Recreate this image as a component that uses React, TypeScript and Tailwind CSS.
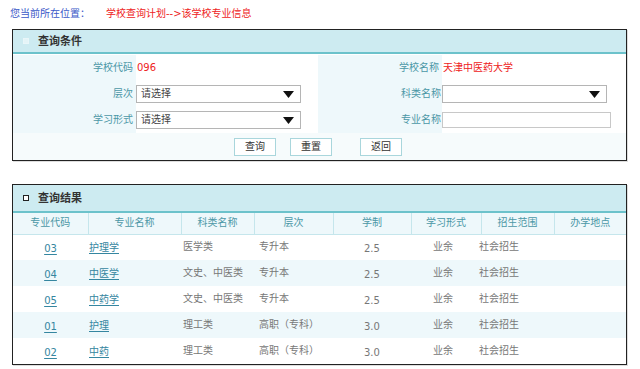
import React from "react";

const rows = [
  { code: "03", name: "护理学", type: "医学类", level: "专升本", years: "2.5" },
  { code: "04", name: "中医学", type: "文史、中医类", level: "专升本", years: "2.5" },
  { code: "05", name: "中药学", type: "文史、中医类", level: "专升本", years: "2.5" },
  { code: "01", name: "护理", type: "理工类", level: "高职（专科）", years: "3.0" },
  { code: "02", name: "中药", type: "理工类", level: "高职（专科）", years: "3.0" },
];

const cols = [
  { label: "专业代码", w: "w-[75px]" },
  { label: "专业名称", w: "w-[93px]" },
  { label: "科类名称", w: "w-[73px]" },
  { label: "层次", w: "w-[79px]" },
  { label: "学制", w: "w-[78px]" },
  { label: "学习形式", w: "w-[70px]" },
  { label: "招生范围", w: "w-[73px]" },
  { label: "办学地点", w: "" },
];

const Select = ({ text }: { text: string }) => (
  <div className="flex items-center justify-between w-[165px] h-[18px] border border-[#b5b5b5] bg-white pl-1 pr-[6px]">
    <span className="text-[#444]">{text}</span>
    <svg width="11" height="7" viewBox="0 0 11 7">
      <path d="M0 0 H11 L5.5 7 Z" fill="#111" />
    </svg>
  </div>
);

const PanelHead = ({ title, dark }: { title: string; dark?: boolean }) => (
  <div className="flex items-center gap-[9px] pl-[10px] bg-[#cdebf1] border-b-2 border-[#6cc2cb]">
    <span
      className={`w-[6px] h-[6px] border ${
        dark ? "border-[#222] bg-[#fff]" : "border-[#e9f6f9] bg-[#e4f4f7]"
      }`}
    />
    <span className="text-[11px] font-bold text-[#333]">{title}</span>
  </div>
);

const Btn = ({ children }: { children: React.ReactNode }) => (
  <button className="w-[42px] h-[18px] border border-[#a9d6dc] bg-white text-[10px] text-[#333]">
    {children}
  </button>
);

export default function App() {
  return (
    <div className="w-[640px] h-[369px] overflow-hidden bg-white font-['DejaVu_Sans','Noto_Sans_CJK_SC',sans-serif] text-[10px] leading-none">
      <div className="flex items-center h-[29px] pl-[10px] pb-[1px]">
        <span className="text-[#3a58c8]">您当前所在位置：</span>
        <span className="ml-[16px] text-[#ee2222]">学校查询计划--&gt;该学校专业信息</span>
      </div>

      {/* 查询条件 */}
      <div className="ml-[12px] w-[615px] border border-[#222] shadow-[1px_1px_0_#ddd]">
        <div className="h-[24px] flex flex-col [&>div]:flex-1">
          <PanelHead title="查询条件" />
        </div>
        <div className="grid grid-cols-[123px_182px_124px_1fr] pt-[1px]">
          <div className="bg-[#eef8fb] h-[26px] flex items-center justify-end pr-[3px] text-[#4b97a6]">学校代码</div>
          <div className="h-[26px] flex items-center pl-[1px] text-[#ee2222]">096</div>
          <div className="bg-[#eef8fb] h-[26px] flex items-center justify-end pr-[3px] text-[#4b97a6]">学校名称</div>
          <div className="h-[26px] flex items-center pl-[1px] text-[#ee2222]">天津中医药大学</div>

          <div className="bg-[#eef8fb] h-[26px] flex items-center justify-end pr-[3px] text-[#4b97a6]">层次</div>
          <div className="h-[26px] flex items-center">
            <Select text="请选择" />
          </div>
          <div className="bg-[#eef8fb] h-[26px] flex items-center justify-end pr-[1px] text-[#4b97a6]">科类名称</div>
          <div className="h-[26px] flex items-center">
            <Select text="" />
          </div>

          <div className="bg-[#eef8fb] h-[26px] flex items-center justify-end pr-[3px] text-[#4b97a6]">学习形式</div>
          <div className="h-[26px] flex items-center">
            <Select text="请选择" />
          </div>
          <div className="bg-[#eef8fb] h-[26px] flex items-center justify-end pr-[1px] text-[#4b97a6]">专业名称</div>
          <div className="h-[26px] flex items-center">
            <div className="w-[169px] h-[16px] border border-[#c8c8c8] bg-white" />
          </div>
        </div>
        <div className="flex items-center h-[27px] pl-[221px] gap-[14px] bg-[#f6fbfc]">
          <Btn>查询</Btn>
          <Btn>重置</Btn>
          <div className="ml-[14px]">
            <Btn>返回</Btn>
          </div>
        </div>
      </div>

      {/* 查询结果 */}
      <div className="mt-[23px] ml-[12px] w-[615px] border border-[#222] shadow-[1px_1px_0_#ddd]">
        <div className="h-[28px] flex flex-col [&>div]:flex-1">
          <PanelHead title="查询结果" dark />
        </div>
        <table className="w-full border-collapse table-fixed">
          <thead>
            <tr className="h-[21px] bg-[#eef8fb]">
              {cols.map((c, i) => (
                <th
                  key={c.label}
                  className={`${c.w} font-normal text-[#4b97a6] text-center border-b border-[#c5e6ec] ${
                    i < cols.length - 1 ? "border-r" : ""
                  } border-r-[#c5e6ec]`}
                >
                  {c.label}
                </th>
              ))}
            </tr>
          </thead>
          <tbody>
            {rows.map((r, i) => (
              <tr key={r.code} className={`h-[26px] ${i % 2 === 1 ? "bg-[#eef8fb]" : "bg-white"}`}>
                <td className="text-center pt-[3px]">
                  <a className="underline underline-offset-2 text-[#3586a0]">{r.code}</a>
                </td>
                <td className="pl-[1px] pt-[1px]">
                  <a className="underline underline-offset-2 text-[#3586a0]">{r.name}</a>
                </td>
                <td className="pl-[2px] text-[#777]">{r.type}</td>
                <td className="pl-[5px] text-[#777]">{r.level}</td>
                <td className="pl-[31px] pt-[3px] text-[#777]">{r.years}</td>
                <td className="pl-[22px] text-[#777]">业余</td>
                <td className="text-[#777] -translate-x-[2px]">社会招生</td>
                <td />
              </tr>
            ))}
          </tbody>
        </table>
      </div>
      <div className="mt-[4px] ml-[482px] w-[38px] h-[10px] border-t-2 border-[#999]" />
    </div>
  );
}
